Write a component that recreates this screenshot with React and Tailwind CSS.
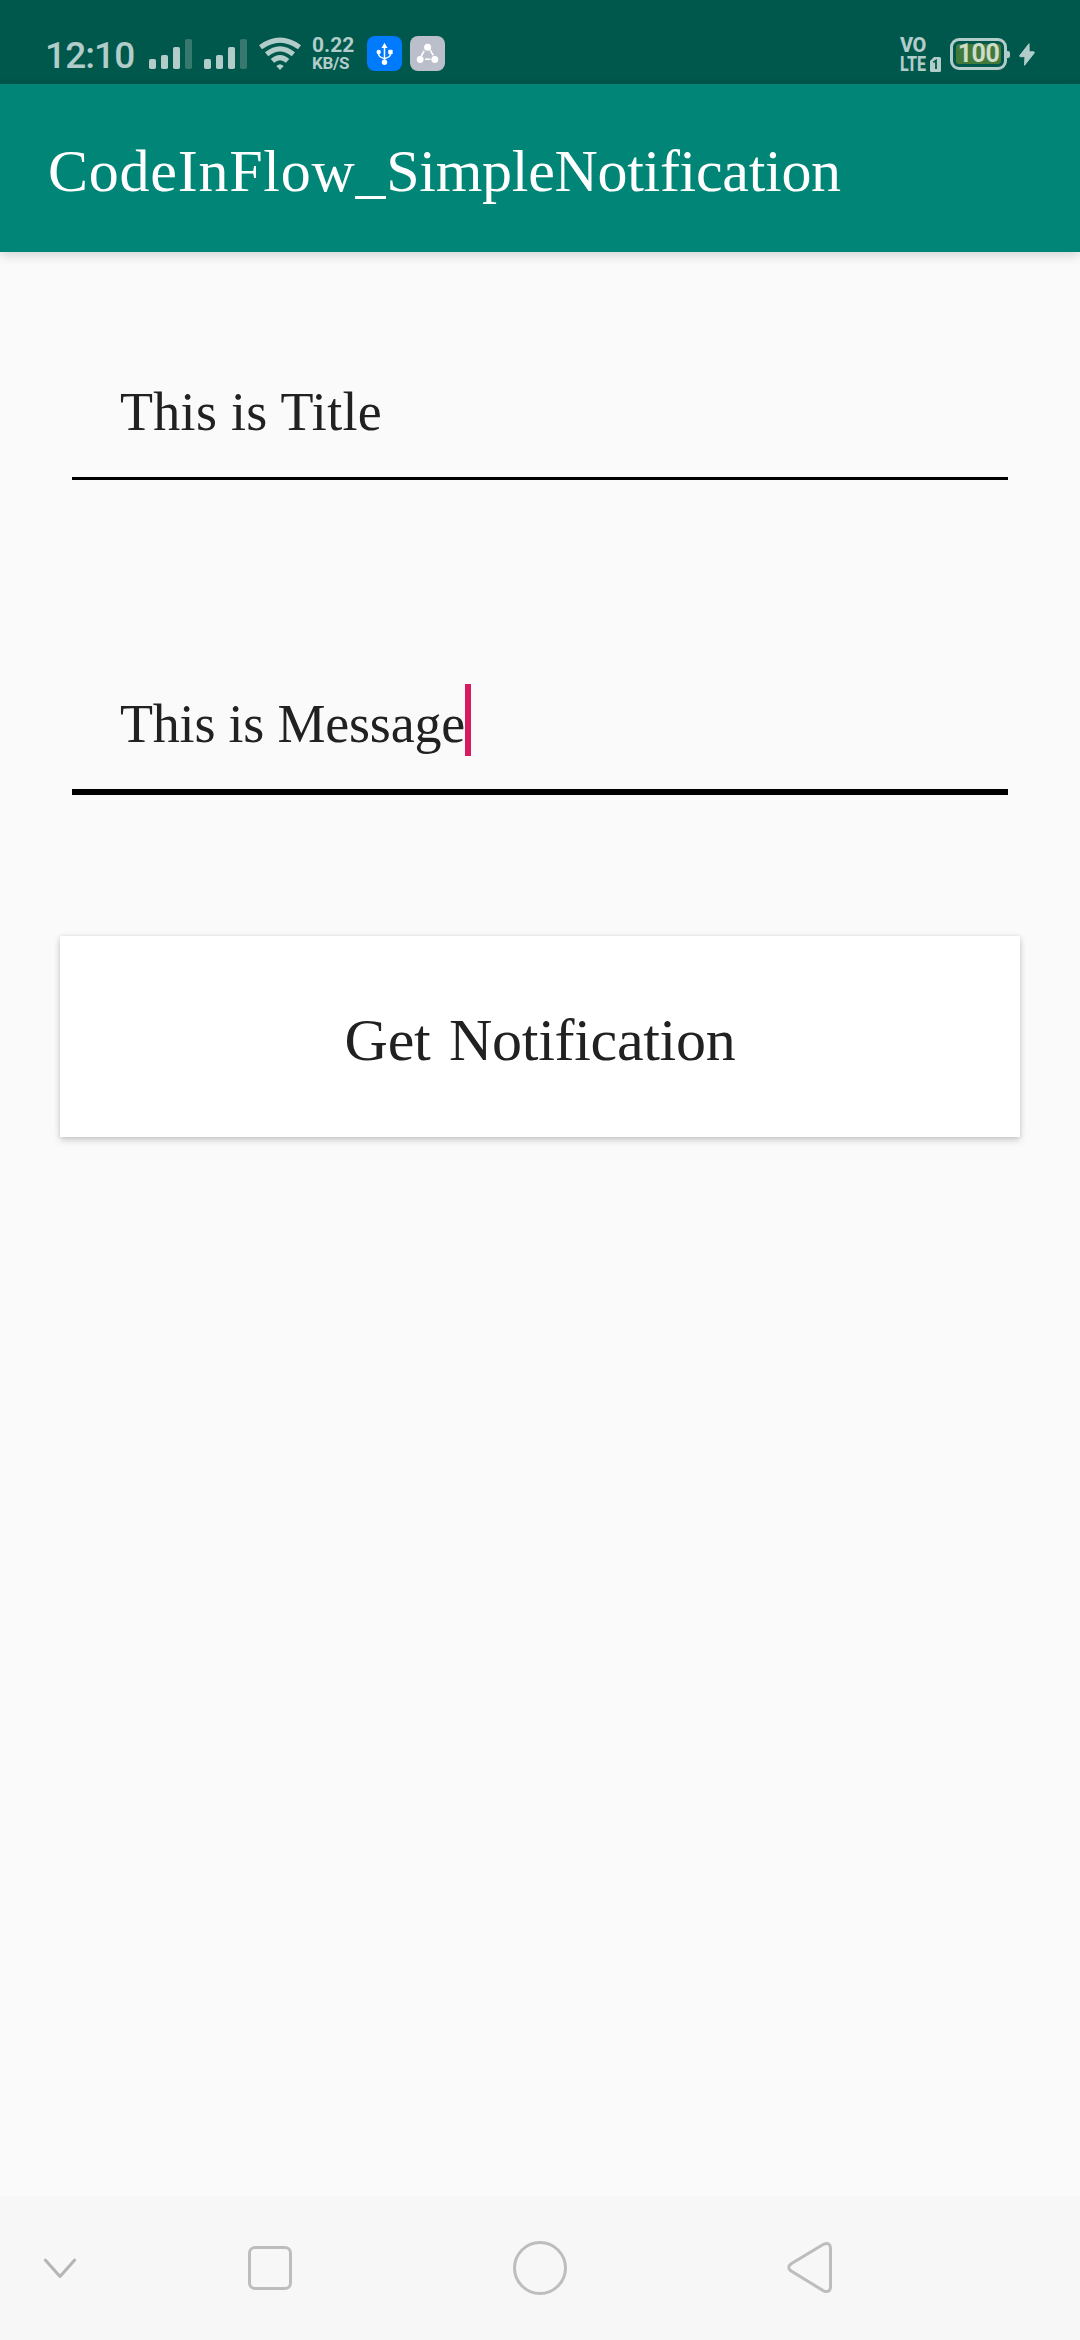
function SignalBars({ className }) {
  return (
    <svg className={className} width="43" height="30" viewBox="0 0 43 30" fill="#b2cdc9">
      <rect x="0" y="20" width="7" height="10" rx="1.8" />
      <rect x="12" y="16" width="7" height="14" rx="1.8" />
      <rect x="24" y="8" width="7" height="22" rx="1.8" />
      <rect x="36" y="0" width="7" height="30" rx="1.8" fill="#37796f" />
    </svg>
  );
}

function WifiIcon() {
  return (
    <svg className="ml-3 mt-[37px]" width="42" height="34" viewBox="0 0 42 34" fill="none" stroke="#b2cdc9" strokeWidth="5">
      <path d="M1.5 10.2 Q21 -4 40.5 10.2" />
      <path d="M7.6 17.3 Q21 6.3 34.4 17.3" />
      <path d="M13.4 23.9 Q21 17.3 28.6 23.9" />
      <path d="M17.8 29 Q21 26.5 24.2 29 L21 32.5 Z" fill="#b2cdc9" strokeWidth="1" />
    </svg>
  );
}

function UsbIcon() {
  return (
    <svg className="ml-3 mt-[36px]" width="35" height="35" viewBox="0 0 35 35">
      <rect width="35" height="35" rx="8" fill="#007bff" />
      <path
        d="M17.5 10 V26 M11.7 16.5 V18.5 Q12 21 17.5 22.7 Q23.2 21 23.4 18.5 V16.5"
        stroke="#fff"
        strokeWidth="1.5"
        fill="none"
      />
      <g fill="#fff">
        <path d="M17.5 6.8 L20.5 12 H14.5 Z" />
        <circle cx="11.7" cy="16" r="2.2" />
        <rect x="21.2" y="13.8" width="4.5" height="4.5" rx="1" />
        <circle cx="17.5" cy="26.3" r="2.7" />
      </g>
    </svg>
  );
}

function ShareTriangleIcon() {
  return (
    <svg className="ml-2 mt-[36px]" width="35" height="35" viewBox="0 0 35 35">
      <rect width="35" height="35" rx="8" fill="#bbbfcb" />
      <g fill="#fff">
        <circle cx="17.6" cy="11.3" r="3.5" />
        <circle cx="10.2" cy="23.5" r="3.4" />
        <circle cx="24.8" cy="23.5" r="3.4" />
      </g>
      <path d="M14.2 15 L11.2 20 M20.2 14.2 L23.3 19.3 M15 23.2 H20.5" stroke="#fff" strokeWidth="1.6" />
    </svg>
  );
}

function Battery() {
  return (
    <div className="mt-[38px] ml-[9px] flex items-center">
      <div className="flex h-8 w-[57px] items-center justify-center rounded-[9px] border-[3px] border-[#b2cdc9]">
        <div className="flex h-5 w-[45px] items-center justify-center rounded-[3px] bg-[#427a3a] text-[25px] leading-5 font-bold tracking-[-0.5px] text-[#cddccb]">
          100
        </div>
      </div>
      <div className="h-[7px] w-[3px] rounded-r-[2px] bg-[#b2cdc9]" />
    </div>
  );
}

function StatusBar() {
  return (
    <div className="flex h-[84px] items-start bg-[#00574b] font-[Roboto,sans-serif] text-[#b2cdc9]">
      <span className="ml-[45px] mt-[38px] w-[104px] text-[37px] leading-9 font-medium tracking-[-0.9px]">12:10</span>
      <SignalBars className="mt-[39px]" />
      <SignalBars className="mt-[39px] ml-3" />
      <WifiIcon />
      <div className="mt-[35px] ml-[11px] flex w-[43px] flex-col font-bold whitespace-nowrap">
        <span className="text-[21px] leading-[21px]">0.22</span>
        <span className="text-[17px] leading-[15px] tracking-[-0.3px]">KB/S</span>
      </div>
      <UsbIcon />
      <ShareTriangleIcon />
      <div className="mt-[36px] ml-auto flex w-[28px] flex-col items-start font-extrabold whitespace-nowrap">
        <span className="text-[20px] leading-[19px] tracking-[-0.4px]">VO</span>
        <span className="origin-left scale-x-[0.8] text-[20px] leading-[19px]">LTE</span>
      </div>
      <svg className="mt-[57px] ml-[2px]" width="11" height="15" viewBox="0 0 11 15">
        <path d="M4 0 H9.5 Q11 0 11 1.5 V13.5 Q11 15 9.5 15 H1.5 Q0 15 0 13.5 V4 Z" fill="#b2cdc9" />
        <path d="M3.3 5.3 L6 3.7 V12" fill="none" stroke="#00574b" strokeWidth="1.8" />
      </svg>
      <Battery />
      <svg className="mt-[43px] mr-[45px] ml-[9px]" width="16" height="23" viewBox="0 0 16 23">
        <path
          d="M10 0.7 L0.8 12.5 Q0.5 13.7 1.5 13.7 H6 L5.5 22.3 L15.2 10 Q15.5 8.8 14.5 8.8 H10.2 Z"
          fill="#b2cdc9"
          stroke="#b2cdc9"
          strokeLinejoin="round"
        />
      </svg>
    </div>
  );
}

function NavBar() {
  return (
    <div className="flex h-36 items-center bg-[#f7f7f7]">
      <div className="flex w-[120px] justify-center">
        <svg width="36" height="24" viewBox="0 0 36 24" fill="none" stroke="#b5b5b5" strokeWidth="3" strokeLinecap="round" strokeLinejoin="round">
          <path d="M3.3 4 L18 20.5 L32.7 4" />
        </svg>
      </div>
      <div className="flex w-[300px] justify-center">
        <div className="size-11 rounded-[7px] border-[3px] border-[#bdbdbd]" />
      </div>
      <div className="flex w-[240px] justify-center">
        <div className="size-[54px] rounded-full border-[3px] border-[#bdbdbd]" />
      </div>
      <div className="flex w-[300px] justify-center">
        <svg width="46" height="54" viewBox="0 0 46 54" fill="none" stroke="#bdbdbd" strokeWidth="3">
          <path d="M36.5 3.3 L3.8 23 Q-0.2 26.4 3.8 29.8 L36.5 49.8 Q42.8 52.3 43.5 46.5 V6.6 Q42.8 0.8 36.5 3.3 Z" />
        </svg>
      </div>
    </div>
  );
}

export default function App() {
  return (
    <div className="flex h-[2340px] w-[1080px] flex-col overflow-hidden bg-[#fafafa] font-['Liberation_Serif',serif]">
      <StatusBar />
      <header className="flex h-[168px] items-center bg-[#008577] pt-[6px] pl-12 shadow-[0_3px_11px_rgba(0,0,0,0.16)]">
        <h1 className="text-[60px] leading-none text-white">
          <span className="tracking-[0.75px]">CodeInFlow_</span>
          <span className="tracking-[-0.3px]">SimpleNotification</span>
        </h1>
      </header>
      <main className="flex grow flex-col pt-[120px]">
        <div className="mx-[72px] border-b-[3px] border-black pt-px pb-[26px] pl-12">
          <div className="text-[54px] leading-[78px] tracking-[0.3px] text-[#212121]">This is Title</div>
        </div>
        <div className="mx-[72px] mt-[204px] flex border-b-[6px] border-black pb-[26px] pl-12">
          <div className="w-[345px] pt-px text-[54px] leading-[78px] tracking-[-0.2px] whitespace-nowrap text-[#212121]">
            This is Message
          </div>
          <div className="h-[72px] w-[6px] bg-[#d81b60]" />
        </div>
        <button className="mx-[60px] mt-[141px] h-[201px] bg-white pt-[7px] text-[60px] leading-none tracking-[-0.3px] text-[#212121] shadow-[0_3px_7px_rgba(0,0,0,0.2),0_0_3px_rgba(0,0,0,0.08)] [word-spacing:4px]">
          Get Notification
        </button>
      </main>
      <NavBar />
    </div>
  );
}
